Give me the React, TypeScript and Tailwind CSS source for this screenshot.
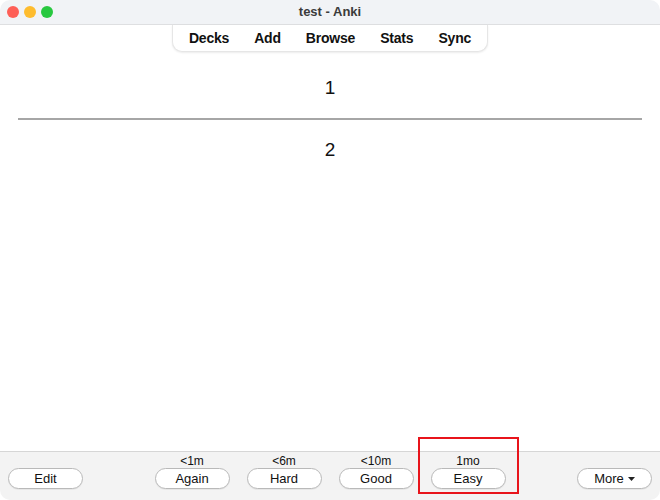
import React from 'react';

const answers = [
  { label: '<1m', text: 'Again' },
  { label: '<6m', text: 'Hard' },
  { label: '<10m', text: 'Good' },
  { label: '1mo', text: 'Easy', marked: true },
];

function PillButton({ children }: { children: React.ReactNode }) {
  return (
    <button className="flex h-[21px] w-[75px] items-center justify-center rounded-full border border-[#b9b9b9] bg-white text-[13px] leading-none text-[#111] shadow-[0_1px_0_rgba(0,0,0,0.05)]">
      {children}
    </button>
  );
}

export default function App() {
  return (
    <div
      className="relative flex h-[500px] w-[660px] flex-col overflow-hidden rounded-[10px] bg-white"
      style={{ fontFamily: '"Liberation Sans", Arial, sans-serif' }}
    >
      {/* Title bar */}
      <div className="grid h-[25px] shrink-0 grid-cols-[1fr_auto_1fr] items-center border-b border-[#dedfe1] bg-[#f1f3f6]">
        <div className="flex items-center gap-[5px] pl-[7px]">
          <span className="h-[12px] w-[12px] rounded-full bg-[#fe5f57]" />
          <span className="h-[12px] w-[12px] rounded-full bg-[#febc2e]" />
          <span className="h-[12px] w-[12px] rounded-full bg-[#28c840]" />
        </div>
        <div className="text-[13px] font-semibold text-[#3b3b3b]">test - Anki</div>
        <div />
      </div>

      {/* Top toolbar */}
      <div className="flex shrink-0 justify-center">
        <div className="flex h-[27px] items-center gap-[25px] rounded-b-[10px] border-x border-b border-[#e6e6e6] bg-white px-[16px] pt-[1px] shadow-[0_1px_2px_rgba(0,0,0,0.08)]">
          {['Decks', 'Add', 'Browse', 'Stats', 'Sync'].map((item) => (
            <button key={item} className="text-[14px] font-bold tracking-[-0.2px] text-[#111]">
              {item}
            </button>
          ))}
        </div>
      </div>

      {/* Card */}
      <div className="flex flex-1 flex-col">
        <div className="mt-[24px] text-center text-[19px] leading-[23px] text-[#111]">1</div>
        <div className="mx-[18px] mt-[19px] h-[2px] bg-[#a6a6a6]" />
        <div className="mt-[18px] text-center text-[19px] leading-[23px] text-[#111]">2</div>
      </div>

      {/* Bottom bar */}
      <div className="flex h-[49px] shrink-0 items-end justify-between border-t border-[#d6d6d6] bg-[#f3f3f3] px-[8px] pb-[11px]">
        <PillButton>Edit</PillButton>

        <div className="flex gap-[17px]">
          {answers.map((a) => (
            <div key={a.text} className="relative flex flex-col items-center">
              <div className="h-[14px] text-[12px] leading-[14px] text-[#111]">{a.label}</div>
              <PillButton>{a.text}</PillButton>
              {a.marked && (
                <div className="pointer-events-none absolute -bottom-[5px] -left-[13px] -right-[13px] -top-[17px] border-2 border-[#e8141b]" />
              )}
            </div>
          ))}
        </div>

        <PillButton>
          <span className="flex items-center gap-[4px]">
            More
            <svg width="7" height="4" viewBox="0 0 7 4">
              <path d="M0 0 L7 0 L3.5 4 Z" fill="#222" />
            </svg>
          </span>
        </PillButton>
      </div>
    </div>
  );
}
